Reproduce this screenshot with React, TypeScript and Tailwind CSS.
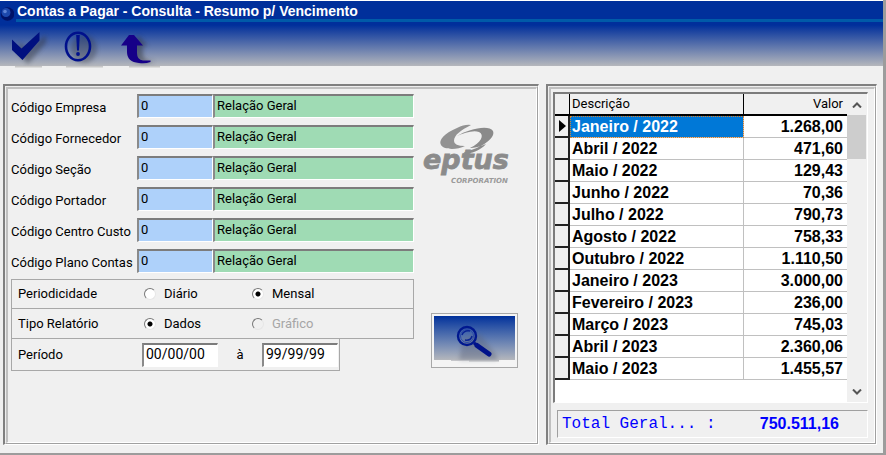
import { useState, type ReactNode } from "react";
import clsx from "clsx";

const FILTERS = [
  { id: "empresa", label: "Código Empresa" },
  { id: "fornecedor", label: "Código Fornecedor" },
  { id: "secao", label: "Código Seção" },
  { id: "portador", label: "Código Portador" },
  { id: "centro-custo", label: "Código Centro Custo" },
  { id: "plano-contas", label: "Código Plano Contas" },
];

const ROWS = [
  { descricao: "Janeiro / 2022", valor: "1.268,00" },
  { descricao: "Abril / 2022", valor: "471,60" },
  { descricao: "Maio / 2022", valor: "129,43" },
  { descricao: "Junho / 2022", valor: "70,36" },
  { descricao: "Julho / 2022", valor: "790,73" },
  { descricao: "Agosto / 2022", valor: "758,33" },
  { descricao: "Outubro / 2022", valor: "1.110,50" },
  { descricao: "Janeiro / 2023", valor: "3.000,00" },
  { descricao: "Fevereiro / 2023", valor: "236,00" },
  { descricao: "Março / 2023", valor: "745,03" },
  { descricao: "Abril / 2023", valor: "2.360,06" },
  { descricao: "Maio / 2023", valor: "1.455,57" },
];

const SUNKEN =
  "border-t-2 border-l-2 border-r border-b border-t-[#7c7c7c] border-l-[#8a8a8a] border-r-white border-b-white outline-none";

function Panel({ children, className }: { children: ReactNode; className?: string }) {
  return (
    <section className="flex min-w-0 flex-col border-t-2 border-l-2 border-r border-b border-t-[#808080] border-l-[#808080] border-r-white border-b-white">
      <div className="flex flex-1 flex-col border border-t-[#eeeeee] border-l-[#eeeeee] border-r-[#a0a0a0] border-b-[#a0a0a0]">
        <div
          className={clsx(
            "flex flex-1 border-t-2 border-l-2 border-r border-b border-t-[#c0c0c0] border-l-[#c0c0c0] border-r-white border-b-white",
            className,
          )}
        >
          {children}
        </div>
      </div>
    </section>
  );
}

function CheckIcon() {
  return (
    <svg viewBox="0 0 44 44" className="h-11 w-11 overflow-visible">
      <path d="M5 19 14 26 32 12V20L14 41 5 31Z" fill="#30343c" opacity=".45" filter="url(#soft)" transform="translate(4 1)" />
      <path d="M5 44H32V45.500H5Z" fill="#c8c8c8" />
      <path d="M2 17.500 11.500 26.500 29.500 10V18.500L12.500 38 2 28Z" fill="#00107f" />
    </svg>
  );
}

function AlertIcon() {
  return (
    <svg viewBox="0 0 44 44" className="h-11 w-11 overflow-visible">
      <ellipse cx="22" cy="27" rx="13" ry="14" fill="#30343c" opacity=".35" filter="url(#soft)" />
      <path d="M4 44H41V45.500H4Z" fill="#c8c8c8" />
      <ellipse cx="16" cy="24.500" rx="12" ry="13.800" fill="none" stroke="#00108c" strokeWidth="2.600" />
      <path d="M14.200 13H17.800L17 28.500H15Z" fill="#00108c" />
      <circle cx="16" cy="32" r="1.900" fill="#00108c" />
    </svg>
  );
}

function ReturnIcon() {
  return (
    <svg viewBox="0 0 44 44" className="h-11 w-11 overflow-visible">
      <path d="M20 14 29 24H24V34Q26 40 36 39 30 42 22 41 14 40 14 32V24H9Z" fill="#30343c" opacity=".5" filter="url(#soft)" transform="translate(5 0)" />
      <path d="M15 44H46V45.500H15Z" fill="#c8c8c8" />
      <path d="M15 13H20L29 23.500H23V31Q23 38 29 38.500H36.500V40Q31 42 25 41 13 40 13 30V23.500H7Z" fill="#160088" />
    </svg>
  );
}

function SearchIcon() {
  return (
    <svg viewBox="0 0 48 36" className="h-9 w-12 overflow-visible">
      <path d="M12 14 29 10 46 32V36H8Z" fill="#5c6478" opacity=".4" filter="url(#soft)" />
      <path d="M0 36H48V37.500H18V36.800H0Z" fill="#b5b7bc" />
      <circle cx="16" cy="12" r="9" fill="none" stroke="#00188f" strokeWidth="2.400" />
      <circle cx="16" cy="12" r="6.500" fill="none" stroke="#2a49a8" strokeWidth="1" />
      <path d="M11 11Q13 6 19 7M14 16Q20 17 21 12" fill="none" stroke="#0a2494" strokeWidth="1.500" />
      <path d="M23 19 27 22" stroke="#00128a" strokeWidth="3" />
      <path d="M26 21.500 38 30" stroke="#00128a" strokeWidth="5" strokeLinecap="round" />
    </svg>
  );
}

function Logo() {
  return (
    <svg viewBox="0 0 92 60" className="h-15 w-23 overflow-visible" role="img" aria-label="eptus corporation">
      <path
        d="M48 2Q42 1 34 5C22 10 15 17 18 22C21 27 34 27 42 23Q31 23 31 18C31 12 38 7 48 2Z"
        fill="#929292"
      />
      <path
        d="M34 13C45 6 66 1 70 8C73 16 57 25 42 29L39 31C49 31 58 27 63 21C55 25 47 25 47 25C58 20 62 12 56 9C50 7 41 10 34 13Z"
        fill="#8a8a8a"
      />
      <text
        x="0"
        y="46"
        fontFamily="'DejaVu Sans', sans-serif"
        fontSize="27"
        fontWeight="bold"
        fontStyle="italic"
        fill="#8b8b8b"
        stroke="#8b8b8b"
        strokeWidth=".800"
      >
        eptus
      </text>
      <text
        x="28"
        y="60"
        fontFamily="'DejaVu Sans', sans-serif"
        fontSize="7"
        fontWeight="bold"
        fontStyle="italic"
        fill="#9a9a9a"
      >
        CORPORATION
      </text>
    </svg>
  );
}

type OptionProps = {
  name: string;
  label: string;
  checked: boolean;
  disabled?: boolean;
  onSelect: () => void;
};

function Option({ name, label, checked, disabled, onSelect }: OptionProps) {
  return (
    <label className={clsx("flex w-[108px] items-center gap-2", disabled && "text-[#a6a6a6]")}>
      <input
        type="radio"
        name={name}
        checked={checked}
        disabled={disabled}
        onChange={onSelect}
        className="h-3 w-3 appearance-none rounded-full border border-t-[#777777] border-r-[#e6e6e6] border-b-[#e6e6e6] border-l-[#777777] bg-white checked:bg-[radial-gradient(circle,#000_2px,#fff_3px)] disabled:bg-[#f0f0f0]"
      />
      {label}
    </label>
  );
}

export default function App() {
  const [periodicidade, setPeriodicidade] = useState("Mensal");
  const [tipo, setTipo] = useState("Dados");
  const [selected, setSelected] = useState(0);

  return (
    <div className="flex min-h-screen flex-col border-r-[3px] border-b-2 border-r-[#9c9c9c] border-b-[#9c9c9c] bg-[#f0f0f0] font-['Roboto',sans-serif] text-[13px] text-black">
      <svg className="absolute h-0 w-0" aria-hidden="true">
        <filter id="soft" x="-30%" y="-30%" width="160%" height="160%">
          <feGaussianBlur stdDeviation="2" />
        </filter>
      </svg>

      <header className="border-t border-white bg-[linear-gradient(#002f9b_0px,#002f9b_24px,#b5b7bc_65px)]">
        <div className="flex h-[21px] items-center gap-0.5">
          <svg viewBox="0 0 14 14" className="mt-1 h-3.5 w-3.5">
            <circle cx="7.500" cy="7" r="6.800" fill="#001268" />
            <circle cx="6" cy="5.500" r="4.500" fill="#1c48ad" />
            <circle cx="5" cy="4.500" r="1.800" fill="#5d83d6" />
          </svg>
          <h1 className="flex-1 self-stretch border-b-[3px] border-[#005aa8] pl-px font-['Liberation_Sans',sans-serif] text-sm leading-5 font-bold text-white">
            Contas a Pagar - Consulta - Resumo p/ Vencimento
          </h1>
        </div>
        <div className="flex h-11 gap-2 pl-2.5">
          <button type="button" aria-label="Confirmar">
            <CheckIcon />
          </button>
          <button type="button" aria-label="Informações">
            <AlertIcon />
          </button>
          <button type="button" aria-label="Voltar">
            <ReturnIcon />
          </button>
        </div>
      </header>

      <main className="grid flex-1 grid-cols-[minmax(0,1fr)_331px] gap-[7px] pt-[18px] pr-1.5 pb-2 pl-[3px]">
        <Panel className="gap-[9px] pt-[5px] pl-[3px]">
          <form className="w-[403px]">
            <div className="flex flex-col gap-[7px]">
              {FILTERS.map((filter) => (
                <div key={filter.id} className="flex h-6">
                  <label htmlFor={filter.id} className="w-[126px] pt-1 leading-5">
                    {filter.label}
                  </label>
                  <input
                    id={filter.id}
                    defaultValue="0"
                    className={clsx(SUNKEN, "w-[76px] bg-[#aed1fa] pb-0.5 pl-0.5")}
                  />
                  <input
                    aria-label={`${filter.label} - descrição`}
                    readOnly
                    value="Relação Geral"
                    className={clsx(SUNKEN, "min-w-0 flex-1 bg-[#9fdbb4] pb-0.5 pl-0.5")}
                  />
                </div>
              ))}
            </div>

            <fieldset className="mt-1.5 flex h-[30px] items-center border border-[#a8a8a8] pl-1.5">
              <span className="w-[126px]">Periodicidade</span>
              {["Diário", "Mensal"].map((item) => (
                <Option
                  key={item}
                  name="periodicidade"
                  label={item}
                  checked={periodicidade === item}
                  onSelect={() => setPeriodicidade(item)}
                />
              ))}
            </fieldset>
            <fieldset className="flex h-[30px] items-center border-x border-b border-[#a8a8a8] pl-1.5">
              <span className="w-[126px]">Tipo Relatório</span>
              {["Dados", "Gráfico"].map((item) => (
                <Option
                  key={item}
                  name="tipo"
                  label={item}
                  checked={tipo === item}
                  disabled={item === "Gráfico"}
                  onSelect={() => setTipo(item)}
                />
              ))}
            </fieldset>
            <fieldset className="flex h-8 w-[329px] items-center border-x border-b border-[#a8a8a8] pl-1.5">
              <label htmlFor="periodo-inicio" className="w-[124px]">
                Período
              </label>
              <input
                id="periodo-inicio"
                defaultValue="00/00/00"
                className={clsx(SUNKEN, "h-6 w-[76px] bg-white pb-0.5 pl-0.5 text-sm")}
              />
              <label htmlFor="periodo-fim" className="w-11 text-center">
                à
              </label>
              <input
                id="periodo-fim"
                defaultValue="99/99/99"
                className={clsx(SUNKEN, "h-6 w-[76px] bg-white pb-0.5 pl-0.5 text-sm")}
              />
            </fieldset>
          </form>

          <div className="flex flex-col items-start pt-[29px]">
            <Logo />
            <button
              type="button"
              aria-label="Pesquisar"
              className="mt-[130px] ml-2 h-[55px] w-[87px] border border-[#a8a8a8] bg-[#f4f4f4] p-0.5"
            >
              <span className="flex h-full flex-col">
                <span className="flex h-11 items-end justify-center bg-linear-to-b from-[#002f9b] to-[#b5b7bc]">
                  <SearchIcon />
                </span>
              </span>
            </button>
          </div>
        </Panel>

        <Panel className="flex-col pt-[3px] pr-1.5 pl-0.5">
          <div className="flex h-[311px] border-t-2 border-r border-b border-l-2 border-t-[#7c7c7c] border-r-white border-b-white border-l-[#7c7c7c] bg-white">
            <div className="flex-1">
              <table className="w-full table-fixed border-separate border-spacing-0 font-['Liberation_Sans',sans-serif] text-base leading-5">
                <colgroup>
                  <col className="w-[15px]" />
                  <col />
                  <col className="w-[103px]" />
                </colgroup>
                <thead>
                  <tr className="h-[22px] bg-[#f0f0f0] font-['Roboto',sans-serif] text-[13px]">
                    <th aria-label="Registro" className="border-r border-b-2 border-black p-0" />
                    <th className="border-r border-b-2 border-black p-0 pl-0.5 text-left font-normal">Descrição</th>
                    <th className="border-b-2 border-black p-0 pr-1 text-right font-normal">Valor</th>
                  </tr>
                </thead>
                <tbody>
                  {ROWS.map((row, index) => (
                    <tr key={row.descricao} className="h-[22px] font-bold" onClick={() => setSelected(index)}>
                      <td className="border-r-2 border-b-2 border-[#222222] bg-[#f0f0f0] p-0">
                        {selected === index && (
                          <svg viewBox="0 0 7 12" className="ml-1 h-3 w-[7px]">
                            <path d="M0 0 7 6 0 12Z" />
                          </svg>
                        )}
                      </td>
                      <td
                        className={clsx(
                          "border-r border-b border-[#c0c0c0] p-0 pl-0.5",
                          selected === index &&
                            "bg-[#0078d7] text-white outline outline-dotted -outline-offset-1 outline-[#d9822b]",
                        )}
                      >
                        {row.descricao}
                      </td>
                      <td className="border-b border-[#c0c0c0] p-0 pr-1 text-right">{row.valor}</td>
                    </tr>
                  ))}
                </tbody>
              </table>
            </div>
            <div className="flex w-5 flex-col bg-[#f0f0f0]">
              <button type="button" aria-label="Rolar para cima" className="flex h-[21px] items-center justify-center">
                <svg viewBox="0 0 10 6" className="h-1.5 w-2.5 fill-none stroke-[#555555] stroke-2">
                  <path d="M1 5.500 5 1.500 9 5.500" />
                </svg>
              </button>
              <div className="h-11 w-[19px] bg-[#cdcdcd]" />
              <button type="button" aria-label="Rolar para baixo" className="mt-auto flex h-5 items-center justify-center">
                <svg viewBox="0 0 10 6" className="h-1.5 w-2.5 fill-none stroke-[#555555] stroke-2">
                  <path d="M1 .500 5 4.500 9 .500" />
                </svg>
              </button>
            </div>
          </div>

          <div className="mt-[7px] ml-1 flex h-7 items-center justify-between border border-t-[#a0a0a0] border-r-white border-b-white border-l-[#a0a0a0] pr-7 pl-1 text-base text-[#0000ff]">
            <span className="font-['Liberation_Mono',monospace]">Total Geral... :</span>
            <output className="font-['Liberation_Sans',sans-serif] font-bold">750.511,16</output>
          </div>
        </Panel>
      </main>
    </div>
  );
}
